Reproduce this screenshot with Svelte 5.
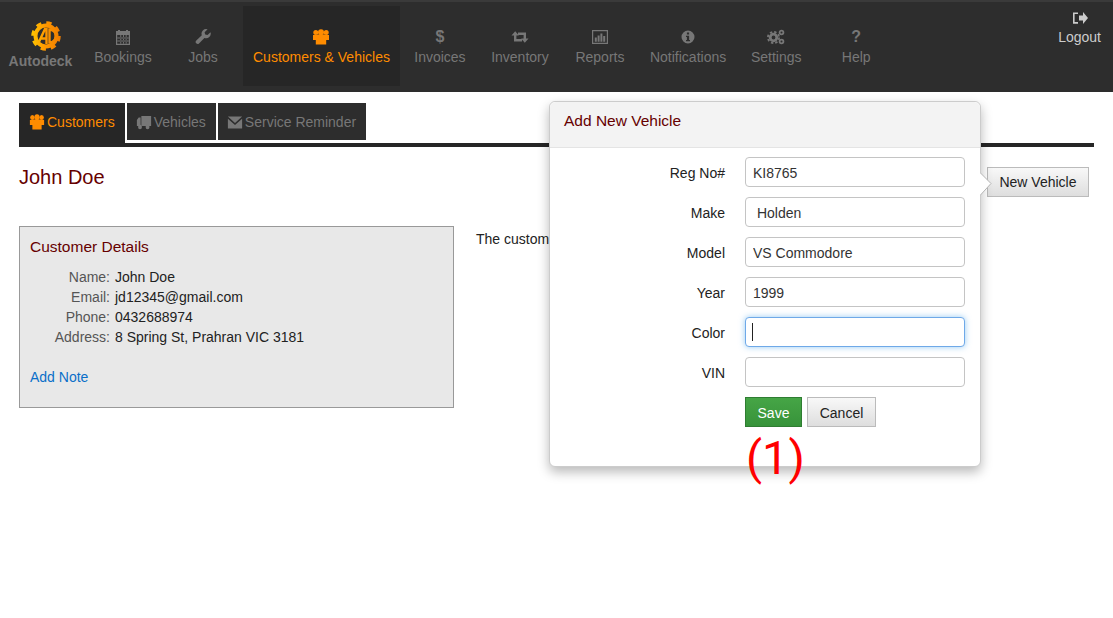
<script>
  const navItems = [
    { label: 'Bookings', icon: 'calendar' },
    { label: 'Jobs', icon: 'wrench' },
    { label: 'Customers & Vehicles', icon: 'group', active: true },
    { label: 'Invoices', icon: 'dollar' },
    { label: 'Inventory', icon: 'retweet' },
    { label: 'Reports', icon: 'chart' },
    { label: 'Notifications', icon: 'info' },
    { label: 'Settings', icon: 'cogs' },
    { label: 'Help', icon: 'question' }
  ];

  const tabs = [
    { label: 'Customers', icon: 'group', active: true },
    { label: 'Vehicles', icon: 'truck' },
    { label: 'Service Reminder', icon: 'envelope' }
  ];

  const details = [
    ['Name:', 'John Doe'],
    ['Email:', 'jd12345@gmail.com'],
    ['Phone:', '0432688974'],
    ['Address:', '8 Spring St, Prahran VIC 3181']
  ];

  const fields = [
    { label: 'Reg No#', value: 'KI8765' },
    { label: 'Make', value: ' Holden' },
    { label: 'Model', value: 'VS Commodore' },
    { label: 'Year', value: '1999' },
    { label: 'Color', value: '', focus: true },
    { label: 'VIN', value: '' }
  ];
</script>

{#snippet icon(name)}
  {#if name === 'dollar'}
    <span class="glyph">$</span>
  {:else if name === 'question'}
    <span class="glyph">?</span>
  {:else}
    <svg class="icon" width="18" height="16" viewBox="0 0 18 16" preserveAspectRatio="none" fill="currentColor">
      {#if name === 'calendar'}
        <path fill-rule="evenodd" d="M2 2h2V1h2v1h6V1h2v1h2v14H2zM3.200 6v8.800h11.600V6zM6.300 6v9h.9V6zM9 6v9h.9V6zM11.700 6v9h.9V6zM3 8.600h12v.9H3zM3 11.500h12v.9H3z" />
      {:else if name === 'wrench'}
        <path d="M16.500 3.200l-3 2.800-2.300-.6-.6-2.200 3-2.900a4.600 4.600 0 0 0-5.800 5.900L2.300 11.600a1.900 1.900 0 0 0 2.700 2.800l5.400-5.500a4.600 4.600 0 0 0 6.100-5.700z" />
      {:else if name === 'group'}
        <circle cx="3.800" cy="3.500" r="2.500" />
        <circle cx="14.200" cy="3.500" r="2.500" />
        <circle cx="9" cy="3.200" r="3" />
        <path d="M1 6h3.500l1.500-.5h6l1.500.5H17v5h-2.800v4.500H3.800V11H1z" />
      {:else if name === 'truck'}
        <path d="M6 2h11v10H6zM1 6l2-2.400h2.200V12H1z" />
        <circle cx="4.500" cy="13" r="2.200" />
        <circle cx="13" cy="13" r="2.200" />
      {:else if name === 'envelope'}
        <path d="M1 2.500h16L9 9zM1 4.800l8 6.300 8-6.300V14.500H1z" />
      {:else if name === 'retweet'}
        <path d="M4.200 6v5.300H11M13.800 10V4.700H7" fill="none" stroke="currentColor" stroke-width="2.400" />
        <path d="M.5 6.500h7.400L4.200 2.300zM10.100 9.500h7.400l-3.700 4.200z" />
      {:else if name === 'chart'}
        <path fill-rule="evenodd" d="M1 1h16v14H1zM2.200 2.200v11.600h13.600V2.200z" />
        <path d="M3.800 8.500h2v4.300h-2zM6.600 6.500h2v6.300h-2zM9.400 4.500h2v8.300h-2zM12.200 7h2v5.800h-2z" />
      {:else if name === 'info'}
        <path fill-rule="evenodd" d="M9 1.500a6.500 6.500 0 1 1 0 13 6.500 6.500 0 0 1 0-13zM7.900 3.600v2h2.200v-2zM7 6.800v1.200h.9v3H7v1.200h4v-1.200h-.9V6.800z" />
      {:else if name === 'cogs'}
        <circle cx="6.500" cy="8.500" r="3.300" fill="none" stroke="currentColor" stroke-width="2.800" />
        <circle cx="6.500" cy="8.500" r="5.600" fill="none" stroke="currentColor" stroke-width="1.800" stroke-dasharray="2.400 2" />
        <circle cx="14.500" cy="3.500" r="1.900" fill="none" stroke="currentColor" stroke-width="1.800" />
        <circle cx="14.500" cy="12.500" r="1.900" fill="none" stroke="currentColor" stroke-width="1.800" />
      {:else if name === 'signout'}
        <path d="M2 2.500h5v1.600H3.600v8H7v1.600H2z" />
        <path d="M8 5.500h4V2l5 6-5 6v-3.500H8z" />
      {/if}
    </svg>
  {/if}
{/snippet}

<nav class="navbar">
  <a class="brand" href="#top">
    <svg class="logo" width="34" height="34" viewBox="0 0 34 34">
      <defs>
        <linearGradient id="gearFill" gradientUnits="userSpaceOnUse" x1="2" x2="32" y1="17" y2="17">
          <stop offset="0" stop-color="#ffc800" />
          <stop offset="0.45" stop-color="#ff9a00" />
          <stop offset="1" stop-color="#f07c00" />
        </linearGradient>
      </defs>
      <circle cx="17" cy="17" r="10.500" fill="none" stroke="url(#gearFill)" stroke-width="4" />
      <circle cx="17" cy="17" r="13" fill="none" stroke="url(#gearFill)" stroke-width="3.500" stroke-dasharray="5.200 5" />
      <path d="M9 25l7-15h1.500V25M12 19.500h5M20.500 10.500a6.500 6.500 0 0 1 0 13z" fill="none" stroke="url(#gearFill)" stroke-width="2.400" />
    </svg>
    <span>Autodeck</span>
  </a>
  {#each navItems as item}
    <a class="nav-item" class:active={item.active} href="#top">
      {@render icon(item.icon)}
      <span>{item.label}</span>
    </a>
  {/each}
  <a class="logout" href="#top">
    {@render icon('signout')}
    <span>Logout</span>
  </a>
</nav>

<main class="content">
  <div class="tabs">
    {#each tabs as tab}
      <a class="tab" class:active={tab.active} href="#top">
        {@render icon(tab.icon)}
        <span>{tab.label}</span>
      </a>
    {/each}
  </div>

  <div class="title-row">
    <h1>John Doe</h1>
    <button class="btn new-vehicle" type="button">New Vehicle</button>
  </div>

  <div class="columns">
    <section class="panel">
      <h2>Customer Details</h2>
      <dl>
        {#each details as [term, desc]}
          <dt>{term}</dt>
          <dd>{desc}</dd>
        {/each}
      </dl>
      <a class="add-note" href="#top">Add Note</a>
    </section>
    <p class="note">The customer has no vehicles.</p>
  </div>
</main>

<aside class="popover">
  <h3>Add New Vehicle</h3>
  <form class="form">
    {#each fields as field}
      <label class="label" for={field.label}>{field.label}</label>
      <div class="field">
        <input id={field.label} class:focus={field.focus} type="text" value={field.value} />
        {#if field.focus}<span class="caret"></span>{/if}
      </div>
    {/each}
    <div class="actions">
      <button class="btn save" type="button">Save</button>
      <button class="btn" type="button">Cancel</button>
    </div>
  </form>
  <svg class="arrow" width="12" height="24" viewBox="0 0 12 24">
    <path d="M0 0.500L11 11.500 0 23.500z" fill="#fff" />
    <path d="M0 0.500L11 11.500 0 23.500" fill="none" stroke="#b5b5b5" />
  </svg>
  <span class="callout">(1)</span>
</aside>

<style>
  :global(body) {
    background: #fff;
    font-family: 'Liberation Sans', Arial, sans-serif;
    font-size: 14px;
    color: #222;
  }

  a {
    text-decoration: none;
  }

  /* top bar */
  .navbar {
    position: relative;
    display: flex;
    align-items: flex-start;
    height: 90px;
    background: #2d2d2d;
    border-top: 2px solid #3a3a3a;
  }

  .brand {
    display: flex;
    flex-direction: column;
    align-items: center;
    width: 81px;
    margin-right: 2px;
    padding-top: 17px;
    font-weight: bold;
    font-size: 14px;
    color: #777;
  }

  .logo {
    margin-left: 10px;
  }

  .brand span {
    line-height: 16px;
  }

  .nav-item {
    display: flex;
    flex-direction: column;
    align-items: center;
    box-sizing: border-box;
    height: 80px;
    min-width: 80px;
    margin-top: 4px;
    padding: 23px 10px 0;
    color: #777;
  }

  .nav-item span:last-child {
    margin-top: 4px;
    line-height: 16px;
    white-space: nowrap;
  }

  .nav-item.active {
    background: #262626;
    color: #ff8c00;
  }

  .glyph {
    display: block;
    height: 16px;
    font-size: 16px;
    font-weight: bold;
    line-height: 16px;
  }

  .icon {
    display: block;
  }

  .logout {
    position: absolute;
    top: 8px;
    right: 12px;
    display: flex;
    flex-direction: column;
    align-items: center;
    color: #ccc;
  }

  .logout span {
    margin-top: 3px;
    line-height: 16px;
  }

  /* page */
  .content {
    padding: 11px 19px 0;
  }

  .tabs {
    display: flex;
    gap: 2px;
    height: 40px;
    border-bottom: 4px solid #262626;
  }

  .tab {
    display: flex;
    align-items: center;
    gap: 2px;
    height: 37px;
    padding: 0 10px 0 9px;
    background: #2d2d2d;
    color: #777;
  }

  .tab .icon {
    width: 16px;
  }

  .tab:first-child {
    height: 44px;
    align-items: flex-start;
    padding: 11px 10px 0;
    box-sizing: border-box;
    background: #262626;
  }

  .tab:first-child span {
    line-height: 16px;
  }

  .tab.active {
    color: #ff8c00;
  }

  .title-row {
    display: flex;
    justify-content: space-between;
    align-items: flex-start;
    padding: 20px 5px 0 0;
    height: 59px;
  }

  h1 {
    margin: 0;
    font-size: 20px;
    font-weight: normal;
    line-height: 20px;
    color: #600;
  }

  .btn {
    box-sizing: border-box;
    height: 30px;
    padding: 0 12px;
    border: 1px solid #bbb;
    background: linear-gradient(#f8f8f8, #dedede);
    font: inherit;
    color: #222;
  }

  .new-vehicle {
    width: 102px;
    padding: 0;
  }

  .columns {
    display: flex;
    align-items: flex-start;
    gap: 22px;
  }

  .panel {
    box-sizing: border-box;
    width: 435px;
    height: 182px;
    padding: 11px 10px;
    background: #e8e8e8;
    border: 1px solid #999;
  }

  h2 {
    margin: 0;
    font-size: 15.500px;
    font-weight: normal;
    line-height: 18px;
    color: #600;
  }

  dl {
    display: grid;
    grid-template-columns: 80px 1fr;
    column-gap: 5px;
    margin: 11px 0 0;
    line-height: 20px;
  }

  dt {
    text-align: right;
    color: #555;
  }

  dd {
    margin: 0;
    color: #222;
  }

  .add-note {
    display: block;
    margin-top: 20px;
    line-height: 20px;
    color: #0a6fc9;
  }

  .note {
    margin: 4px 0 0;
    line-height: 18px;
  }

  /* popover */
  .popover {
    position: absolute;
    top: 101px;
    left: 549px;
    box-sizing: border-box;
    width: 432px;
    height: 366px;
    background: #fff;
    border: 1px solid #ccc;
    border-radius: 6px;
    box-shadow: 0 5px 12px rgba(0, 0, 0, 0.28);
  }

  h3 {
    margin: 0;
    height: 45px;
    padding-left: 14px;
    background: #f3f3f3;
    border-bottom: 1px solid #e4e4e4;
    border-radius: 6px 6px 0 0;
    font-size: 15.500px;
    font-weight: normal;
    line-height: 37px;
    color: #600;
  }

  .form {
    display: grid;
    grid-template-columns: 175px 220px;
    column-gap: 20px;
    row-gap: 10px;
    padding-top: 9px;
  }

  .label {
    line-height: 32px;
    height: 30px;
    text-align: right;
    color: #222;
  }

  .field {
    position: relative;
  }

  input {
    display: block;
    box-sizing: border-box;
    width: 220px;
    height: 30px;
    padding: 1px 7px 0;
    border: 1px solid #c4c4c4;
    border-radius: 4px;
    background: #fff;
    font: inherit;
    color: #333;
    white-space: pre;
    outline: none;
  }

  input.focus {
    border-color: #6fa9e8;
    box-shadow: 0 0 6px rgba(82, 168, 236, 0.6);
  }

  .caret {
    position: absolute;
    left: 7px;
    top: 6px;
    width: 1px;
    height: 18px;
    background: #222;
  }

  .actions {
    grid-column: 2;
    display: flex;
    gap: 5px;
  }

  .save {
    padding: 1px 0 0;
    width: 57px;
    border-color: #2f7d32;
    background: linear-gradient(#46a546, #37933a);
    color: #fff;
  }

  .actions .btn:last-child {
    width: 69px;
    padding: 1px 0 0;
  }

  .arrow {
    position: absolute;
    top: 70px;
    left: 430px;
  }

  .callout {
    position: absolute;
    top: 328px;
    left: 196px;
    font-family: Roboto, Arial, sans-serif;
    font-size: 47px;
    line-height: 56px;
    color: #f00;
  }
</style>
